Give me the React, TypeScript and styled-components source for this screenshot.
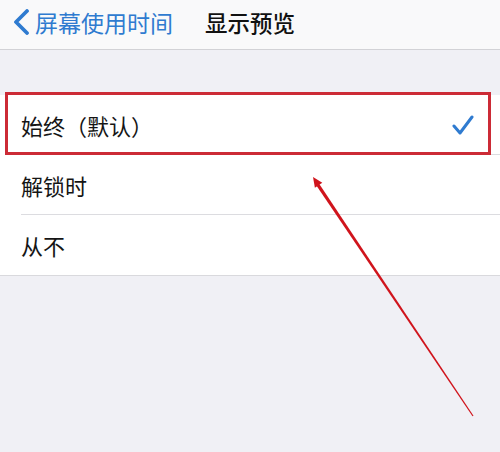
import React from "react";
import styled, { createGlobalStyle, css } from "styled-components";

const GlobalStyle = createGlobalStyle`
  html, body {
    margin: 0;
    padding: 0;
    background: #f0f0f5;
  }
  body {
    font-family: "Noto Sans CJK SC", "Noto Sans", sans-serif;
  }
`;

const Screen = styled.div`
  position: relative;
  width: 500px;
  height: 452px;
  overflow: hidden;
  background: #f0f0f5;
`;

const NavBar = styled.div`
  height: 50px;
  box-sizing: border-box;
  padding: 0 0 6px 13px;
  display: flex;
  align-items: center;
  background: #f9f9fa;
  border-bottom: 1px solid #d2d2d6;
`;

const BackButton = styled.div`
  display: flex;
  align-items: center;
  gap: 5px;
  color: #2f7bd0;
  font-size: 23px;
`;

const Title = styled.div`
  margin-left: 32px;
  color: #111;
  font-size: 22.5px;
  font-weight: 500;
`;

const Group = styled.div`
  margin-top: 45px;
  background: #fff;
  border-bottom: 1px solid #d9d9dd;
`;

const Row = styled.div<{ $highlighted?: boolean; $last?: boolean }>`
  position: relative;
  height: 60px;
  margin-left: 21px;
  padding-right: 26px;
  display: flex;
  align-items: center;
  justify-content: space-between;
  font-size: 22px;
  color: #151515;
  box-sizing: border-box;
  ${(p) =>
    !p.$last &&
    css`
      border-bottom: 1px solid #dcdce0;
    `}
  ${(p) =>
    p.$highlighted &&
    css`
      &::after {
        content: "";
        position: absolute;
        left: -16px;
        right: 9px;
        top: -3px;
        bottom: -1px;
        border: 3px solid #cc2b36;
        pointer-events: none;
      }
    `}
`;

const Arrow = styled.svg`
  position: absolute;
  left: 0;
  top: 0;
  pointer-events: none;
`;

export default function App() {
  return (
    <>
      <GlobalStyle />
      <Screen>
        <NavBar>
          <BackButton>
            <svg width="17" height="26" viewBox="0 0 17 26">
              <path
                d="M14 2 L3 13 L14 24"
                fill="none"
                stroke="#2f7bd0"
                strokeWidth="3.8"
                strokeLinecap="round"
                strokeLinejoin="round"
              />
            </svg>
            屏幕使用时间
          </BackButton>
          <Title>显示预览</Title>
        </NavBar>
        <Group>
          <Row $highlighted>
            始终（默认）
            <svg width="22" height="22" viewBox="0 0 22 22">
              <path
                d="M2 12 L8 19 L20 3"
                fill="none"
                stroke="#2f7bd0"
                strokeWidth="3"
                strokeLinecap="round"
                strokeLinejoin="round"
              />
            </svg>
          </Row>
          <Row>解锁时</Row>
          <Row $last>从不</Row>
        </Group>
        <Arrow width="500" height="452" viewBox="0 0 500 452">
          <polygon
            points="473.5,415.7 472.5,416.3 316.7,185.9 319.3,184.1"
            fill="#d0141c"
          />
          <polygon points="313,177 322.3,182.8 314.9,187.8" fill="#d0141c" />
        </Arrow>
      </Screen>
    </>
  );
}
